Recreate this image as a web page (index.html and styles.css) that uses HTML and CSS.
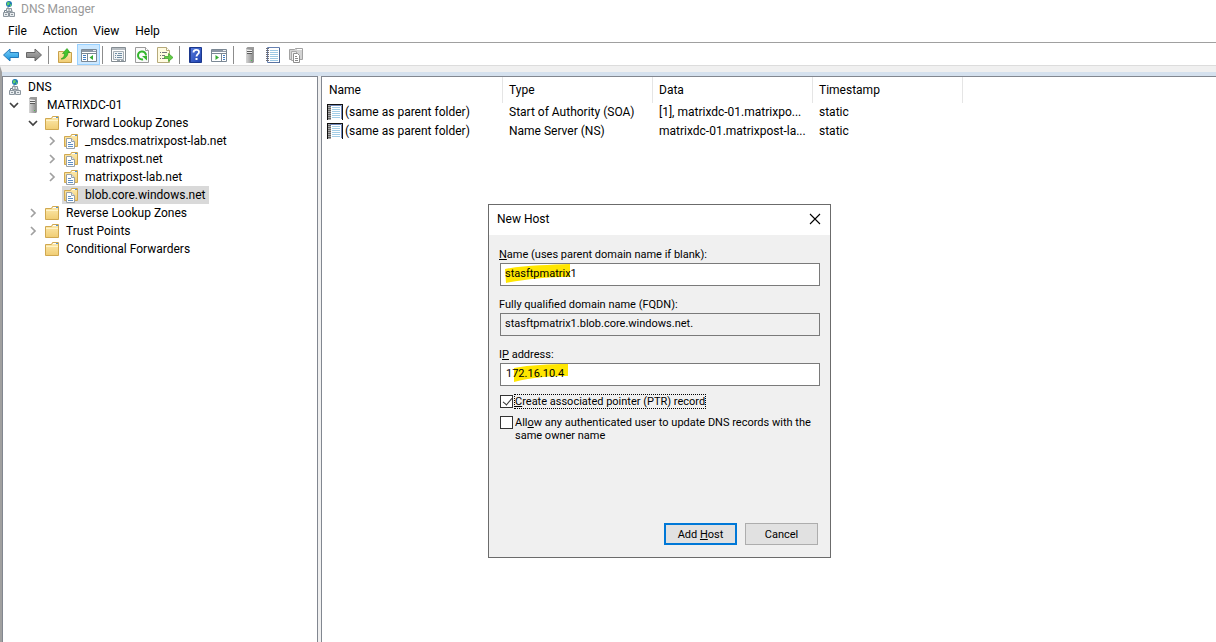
FILE: index.html
```html
<!DOCTYPE html>
<html lang="en">
<head>
<meta charset="utf-8">
<title>DNS Manager</title>
<link rel="stylesheet" href="styles.css">
</head>
<body>
<svg class="sprite" aria-hidden="true">
  <defs>
    <linearGradient id="g-folder" x1="0" y1="0" x2="0" y2="1"><stop offset="0" stop-color="#fdebb0"/><stop offset="1" stop-color="#f0cc72"/></linearGradient>
    <linearGradient id="g-blue" x1="0" y1="0" x2="0" y2="1"><stop offset="0" stop-color="#7fd2fb"/><stop offset="1" stop-color="#1591dc"/></linearGradient>
    <linearGradient id="g-gray" x1="0" y1="0" x2="0" y2="1"><stop offset="0" stop-color="#b4b4b4"/><stop offset="1" stop-color="#777"/></linearGradient>
    <linearGradient id="g-server" x1="0" y1="0" x2="1" y2="0"><stop offset="0" stop-color="#d6d6d6"/><stop offset="1" stop-color="#8c8c8c"/></linearGradient>
    <linearGradient id="g-help" x1="0" y1="0" x2="1" y2="1"><stop offset="0" stop-color="#5b7fe0"/><stop offset="1" stop-color="#1c3fae"/></linearGradient>
  </defs>
  <symbol id="i-dns" viewBox="0 0 16 16">
    <path d="M8 6v3M4.500 11V9.500H12V11" fill="none" stroke="#70808c"/>
    <circle cx="9" cy="3" r="3" fill="#1d78b4"/><path d="M7 1.500l2-.5 1 1-1 2-2 .5zM10 3.500l1.500-.5-.5 2-1 .5z" fill="#5fd068"/>
    <path d="M6.500 7.500h5v3h-5zM3.500 11.500h5v4h-5zM9.500 11.500h5v4h-5z" fill="#e7ebee" stroke="#8c969e"/>
    <path d="M5 13.500h2M11 13.500h2M8 9h2" stroke="#8d979e"/>
  </symbol>
  <symbol id="i-server" viewBox="0 0 16 16">
    <path d="M4 1.500L5.500 0H12v15l-1 1H4z" fill="#9b9b9b"/><path d="M4 2h7v14H4z" fill="url(#g-server)"/>
    <path d="M5 4.500h5M5 6.500h5" stroke="#5c5c5c"/><path d="M5 3.500h5M5 5.500h5" stroke="#efefef"/>
    <path d="M9 13h1v1H9z" fill="#47c34c"/>
  </symbol>
  <symbol id="i-folder" viewBox="0 0 16 16">
    <path d="M1.500 14.500V3.500h6l1-2h6v13z" fill="url(#g-folder)" stroke="#d0a850"/>
    <path d="M9 2.500h5" stroke="#fff"/><path d="M12 2.500h2" stroke="#4f94d8"/><path d="M2 5.500h12" stroke="#fff3c8"/>
  </symbol>
  <symbol id="i-zone" viewBox="0 0 16 16">
    <path d="M1.500 13.500V3.500h6l1-2h6v12z" fill="url(#g-folder)" stroke="#d0a850"/>
    <path d="M9 2.500h5" stroke="#fff"/><path d="M12 2.500h2" stroke="#4f94d8"/>
    <path d="M3.500 5.500h5l3 3v7h-8z" fill="#fff" stroke="#9aa2a8"/><path d="M8.500 5.500v3h3" fill="#e4ebf0" stroke="#9aa2a8"/>
    <path d="M5 9.500h3M5 11.500h5M5 13.500h5" stroke="#5f8fc4"/>
  </symbol>
  <symbol id="i-back" viewBox="0 0 16 16"><path d="M.5 8L7 2v3.500h8.500v5H7V14z" fill="url(#g-blue)" stroke="#2478b8"/></symbol>
  <symbol id="i-forward" viewBox="0 0 16 16"><path d="M15.500 8L9 2v3.500H.5v5H9V14z" fill="url(#g-gray)" stroke="#666"/></symbol>
  <symbol id="i-up" viewBox="0 0 16 16">
    <path d="M1.500 15.500V4.500h5l1.500 1h6.500v10z" fill="url(#g-folder)" stroke="#c9a04a"/>
    <path d="M4 12c2.500-1 3.500-3 3.500-5.500H5.500L10 1.500l3 4h-2C11 9 8 12.500 4 12z" fill="#43c52f" stroke="#239413" stroke-width=".6"/>
  </symbol>
  <symbol id="i-tree" viewBox="0 0 16 16">
    <path d="M.5 2.500h15v12H.5z" fill="#fff" stroke="#7b8894"/><path d="M1 4h14" stroke="#8d98a5" stroke-width="2"/><path d="M12 3.500h3" stroke="#e8edf2"/><path d="M0 6.500h16M6.500 7v8" stroke="#7b8894"/>
    <path d="M2 8.500h3M2 10.500h3M2 12.500h3" stroke="#3f7dc4"/><path d="M12 8v5l-3.500-2.500z" fill="#36ad32"/>
  </symbol>
  <symbol id="i-pane" viewBox="0 0 16 16">
    <path d="M.5 2.500h15v12H.5z" fill="#fff" stroke="#7b8894"/><path d="M1 4h14" stroke="#8d98a5" stroke-width="2"/><path d="M12 3.500h3" stroke="#e8edf2"/><path d="M0 6.500h16M10.500 7v8" stroke="#7b8894"/>
    <path d="M12 8.500h2M12 10.500h2M12 12.500h2" stroke="#3f7dc4"/><path d="M4.500 8v5L8 10.500z" fill="#36ad32"/>
  </symbol>
  <symbol id="i-props" viewBox="0 0 16 16">
    <path d="M.5.500h14v14H.5z" fill="#fff" stroke="#858d93"/><path d="M1 2h13" stroke="#b8bec3" stroke-width="2"/>
    <path d="M2.500 4.500h10v8h-10z" fill="#f1f4f6" stroke="#a7b0b6"/><path d="M4 6.500h2M7 6.500h4M4 8.500h1M6 8.500h5M4 10.500h1M6 10.500h5" stroke="#718ea4"/><path d="M6 13.500h3M10 13.500h3" stroke="#9aa4ab"/>
  </symbol>
  <symbol id="i-refresh" viewBox="0 0 16 16">
    <path d="M1.500.500h10l3 3v12h-13z" fill="#fafafa" stroke="#9b9b9b"/><path d="M11.500.500v3h3" fill="#fff" stroke="#9b9b9b"/>
    <path d="M9 12.300A4 4 0 1 1 12 8.500" fill="none" stroke="#33b52c" stroke-width="2"/><path d="M8 9h5v4.500z" fill="#33b52c"/>
  </symbol>
  <symbol id="i-export" viewBox="0 0 16 16">
    <path d="M.5.500h9l3 3v12H.5z" fill="#fffbe0" stroke="#b6aa7b"/><path d="M9.500.500v3h3" fill="#fff" stroke="#b6aa7b"/>
    <path d="M3 5.500h1M3 8.500h1M3 11.500h1M5 5.500h5M5 8.500h3M5 11.500h3" stroke="#76767c"/>
    <path d="M7.500 9.500h4V6.500l4.500 4-4.500 4v-3h-4z" fill="#62cd45" stroke="#379b25" stroke-width=".7"/>
  </symbol>
  <symbol id="i-help" viewBox="0 0 16 16">
    <path d="M1.500.500h12v15h-12z" fill="url(#g-help)" stroke="#1c388c"/><path d="M2.500 1v14" stroke="#233c8e"/>
    <path d="M5.500 5.500c0-3.500 5.500-3.500 5.500-.5 0 2-2.500 2.300-2.500 4.500" fill="none" stroke="#fff" stroke-width="1.800"/><path d="M7.500 11h2v2h-2z" fill="#fff"/>
  </symbol>
  <symbol id="i-note" viewBox="0 0 16 16">
    <path d="M2.500.500h12v15h-12z" fill="#fff" stroke="#6782b3"/><path d="M5 3.500h8M5 5.500h8M5 7.500h8M5 9.500h8M5 11.500h8M5 13.500h8" stroke="#9cc8e4"/>
    <path d="M1 1.500h3M1 3.500h3M1 5.500h3M1 7.500h3M1 9.500h3M1 11.500h3M1 13.500h3" stroke="#6f6f78"/><path d="M14.500 1v15H3" fill="none" stroke="#4d6693"/>
  </symbol>
  <symbol id="i-record" viewBox="0 0 16 16">
    <path d="M0 0h16v16H0z" fill="#111"/><path d="M1 1h14v15H1z" fill="#fff"/><path d="M1 1h3v15H1z" fill="#aaa"/>
    <path d="M1 2.500h3M1 4.500h3M1 6.500h3M1 8.500h3M1 10.500h3M1 12.500h3M1 14.500h3" stroke="#656565"/>
    <path d="M5 3.500h8M5 5.500h8M5 7.500h8M5 9.500h8M5 11.500h8M5 13.500h8" stroke="#a3cde6"/><path d="M3 1.500h11.500V15" fill="none" stroke="#7089bb"/>
  </symbol>
  <symbol id="i-docs" viewBox="0 0 16 16">
    <path d="M1.500 12.500v-10h5l1-1h7v11z" fill="#d3d3d3" stroke="#a2a2a2"/><path d="M9 2.500h5" stroke="#fff"/>
    <path d="M3.500 4.500h5v9h-5z" fill="#eee" stroke="#aaa"/><path d="M5.500 6.500h4l2 2v7h-6z" fill="#fff" stroke="#8f8f8f"/><path d="M7 9.500h2M7 11.500h3M7 13.500h3" stroke="#888"/>
  </symbol>
  <symbol id="i-open" viewBox="0 0 10 10"><path d="M1 3l4 4 4-4" fill="none" stroke="#404040" stroke-width="1.700"/></symbol>
  <symbol id="i-closed" viewBox="0 0 10 10"><path d="M3 1l4 4-4 4" fill="none" stroke="#a0a0a0" stroke-width="1.700"/></symbol>
</svg>

<div class="app">
  <header class="titlebar"><svg class="icon"><use href="#i-dns"/></svg><span>DNS Manager</span></header>
  <nav class="menubar">
    <button type="button">File</button><button type="button">Action</button><button type="button">View</button><button type="button">Help</button>
  </nav>
  <div class="toolbar" role="toolbar" aria-label="Tools">
    <button type="button" aria-label="Back"><svg class="icon"><use href="#i-back"/></svg></button>
    <button type="button" aria-label="Forward"><svg class="icon"><use href="#i-forward"/></svg></button>
    <i class="sep"></i>
    <button type="button" aria-label="Up one level"><svg class="icon"><use href="#i-up"/></svg></button>
    <button type="button" class="active" aria-label="Show or hide console tree"><svg class="icon"><use href="#i-tree"/></svg></button>
    <i class="sep"></i>
    <button type="button" aria-label="Properties"><svg class="icon"><use href="#i-props"/></svg></button>
    <button type="button" aria-label="Refresh"><svg class="icon"><use href="#i-refresh"/></svg></button>
    <button type="button" aria-label="Export list"><svg class="icon"><use href="#i-export"/></svg></button>
    <i class="sep"></i>
    <button type="button" aria-label="Help topics"><svg class="icon"><use href="#i-help"/></svg></button>
    <button type="button" aria-label="Show or hide action pane"><svg class="icon"><use href="#i-pane"/></svg></button>
    <i class="sep"></i>
    <button type="button" aria-label="New server"><svg class="icon"><use href="#i-server"/></svg></button>
    <button type="button" aria-label="New record"><svg class="icon"><use href="#i-note"/></svg></button>
    <button type="button" aria-label="New zone"><svg class="icon"><use href="#i-docs"/></svg></button>
  </div>
  <main class="workspace">
    <ul class="tree pane">
      <li><span class="item"><svg class="icon"><use href="#i-dns"/></svg><span>DNS</span></span></li>
      <li class="l1"><svg class="chev"><use href="#i-open"/></svg><span class="item"><svg class="icon"><use href="#i-server"/></svg><span>MATRIXDC-01</span></span></li>
      <li class="l2"><svg class="chev"><use href="#i-open"/></svg><span class="item"><svg class="icon"><use href="#i-folder"/></svg><span>Forward Lookup Zones</span></span></li>
      <li class="l3"><svg class="chev"><use href="#i-closed"/></svg><span class="item"><svg class="icon"><use href="#i-zone"/></svg><span>_msdcs.matrixpost-lab.net</span></span></li>
      <li class="l3"><svg class="chev"><use href="#i-closed"/></svg><span class="item"><svg class="icon"><use href="#i-zone"/></svg><span>matrixpost.net</span></span></li>
      <li class="l3"><svg class="chev"><use href="#i-closed"/></svg><span class="item"><svg class="icon"><use href="#i-zone"/></svg><span>matrixpost-lab.net</span></span></li>
      <li class="l3"><svg class="chev"></svg><span class="item selected"><svg class="icon"><use href="#i-zone"/></svg><span>blob.core.windows.net</span></span></li>
      <li class="l2"><svg class="chev"><use href="#i-closed"/></svg><span class="item"><svg class="icon"><use href="#i-folder"/></svg><span>Reverse Lookup Zones</span></span></li>
      <li class="l2"><svg class="chev"><use href="#i-closed"/></svg><span class="item"><svg class="icon"><use href="#i-folder"/></svg><span>Trust Points</span></span></li>
      <li class="l2"><svg class="chev"></svg><span class="item"><svg class="icon"><use href="#i-folder"/></svg><span>Conditional Forwarders</span></span></li>
    </ul>
    <section class="records pane">
      <table>
        <colgroup><col class="c-name"><col class="c-type"><col class="c-data"><col class="c-time"></colgroup>
        <thead><tr><th>Name</th><th>Type</th><th>Data</th><th>Timestamp</th></tr></thead>
        <tbody>
          <tr><td><span class="rec"><svg class="icon"><use href="#i-record"/></svg>(same as parent folder)</span></td><td>Start of Authority (SOA)</td><td>[1], matrixdc-01.matrixpo...</td><td>static</td></tr>
          <tr><td><span class="rec"><svg class="icon"><use href="#i-record"/></svg>(same as parent folder)</span></td><td>Name Server (NS)</td><td>matrixdc-01.matrixpost-la...</td><td>static</td></tr>
        </tbody>
      </table>
    </section>
  </main>

  <form class="dialog" role="dialog" aria-labelledby="dlg-title">
    <div class="dialog-title"><span id="dlg-title">New Host</span>
      <button type="button" aria-label="Close"><svg viewBox="0 0 12 12"><path d="M1 1l10 10M11 1L1 11" stroke="#000" stroke-width="1.100"/></svg></button></div>
    <div class="dialog-body">
      <div class="field"><label for="host"><u>N</u>ame (uses parent domain name if blank):</label>
        <div class="box"><svg class="mark" viewBox="0 0 66 20"><path d="M0 5C20 1 45 1 65 0V13C40 13 22 15 1 19z" fill="#ffe600"/></svg><input id="host" type="text" value="stasftpmatrix1"></div></div>
      <div class="field"><label for="fqdn">Fully qualified domain name (FQDN):</label>
        <div class="box readonly"><input id="fqdn" type="text" value="stasftpmatrix1.blob.core.windows.net." readonly></div></div>
      <div class="field"><label for="ip">I<u>P</u> address:</label>
        <div class="box ip"><svg class="mark" viewBox="0 0 66 20"><path d="M9 4C25 1 45 0 63 0V12C45 12 28 13 9 18z" fill="#ffe600"/></svg><input id="ip" type="text" value="172.16.10.4"></div></div>
      <div class="check"><input id="ptr" type="checkbox" checked><label for="ptr" class="focus"><u>C</u>reate associated pointer (PTR) record</label></div>
      <div class="check"><input id="allow" type="checkbox"><label for="allow">All<u>o</u>w any authenticated user to update DNS records with the<br>same owner name</label></div>
      <div class="actions"><button type="button" class="primary"><span>Add <u>H</u>ost</span></button><button type="button">Cancel</button></div>
    </div>
  </form>
</div>
</body>
</html>
```

FILE: styles.css
```css
* { box-sizing: border-box; }
html, body { height: 100%; margin: 0; }
body { background: #fff; color: #000; font: 12px/18px Roboto, "Open Sans", sans-serif; overflow: hidden; }
button, input { font: inherit; color: inherit; }
button { background: none; border: 0; padding: 0; }
.sprite { position: absolute; width: 0; height: 0; }
.icon { width: 16px; height: 16px; flex: none; display: block; }

.app { position: relative; height: 100%; display: flex; flex-direction: column; }
.titlebar { display: flex; align-items: center; gap: 5px; height: 18px; color: #999; }
.menubar { display: flex; gap: 16px; height: 24px; align-items: center; padding: 2px 8px 0; }
.toolbar { display: flex; height: 24px; align-items: center; padding-top: 1px; border-top: 1px solid #a0a0a0; border-bottom: 1px solid #dcdcdc; }
.toolbar button { width: 23px; height: 21px; display: flex; align-items: flex-end; justify-content: center; padding: 0 1px 2px 0; }
.toolbar .active { background: #cce8ff; border: 1px solid #99d1ff; padding: 0 0 1px; }
.sep { width: 8px; height: 18px; display: flex; padding-left: 2px; }
.sep::before { content: ""; width: 1px; background: #8c8c8c; }

.workspace { flex: 1; display: flex; gap: 3px; min-height: 0; background: #f0f0f0; border-top: 6px solid #f0f0f0; border-left: 2px solid #a0a0a0; box-shadow: inset 0 4px #d5e1ee; padding-top: 4px; }
.pane { background: #fff; border: 1px solid #828790; border-bottom: 0; }
.tree { width: 316px; flex: none; margin: 0; padding: 1px 0 0 3px; list-style: none; }
.tree li { display: flex; align-items: center; height: 18px; }
.l1 { padding-left: 3px; }
.l2 { padding-left: 22px; }
.l3 { padding-left: 41px; }
.chev { width: 10px; height: 10px; flex: none; margin-right: 5px; }
.item { display: flex; align-items: center; gap: 6px; height: 18px; padding: 0 4px 0 1px; white-space: nowrap; }
.tree li:first-child .item { padding-left: 0; }
.selected { background: #d9d9d9; }

.records { flex: 1; border-right: 0; min-width: 0; overflow: hidden; }
table { table-layout: fixed; width: 641px; border-collapse: separate; border-spacing: 0; }
.c-name { width: 181px; }
.c-type { width: 150px; }
.c-data { width: 160px; }
.c-time { width: 150px; }
th { height: 26px; padding: 0 6px 0 7px; text-align: left; font-weight: 400; border-right: 1px solid #e5e5e5; }
th + th, td + td { padding-left: 6px; }
td { height: 19px; padding: 0 0 0 5px; vertical-align: top; white-space: nowrap; }
.rec { display: flex; align-items: center; gap: 2px; }

.dialog { position: absolute; left: 488px; top: 204px; width: 343px; border: 1px solid #6b6b6b; background: #f0f0f0; font-size: 11px; line-height: 13px; }
.dialog-title { display: flex; align-items: center; justify-content: space-between; height: 30px; padding: 0 9px 2px 8px; background: #fff; font-size: 12px; line-height: 14px; }
.dialog-title svg { display: block; width: 12px; height: 12px; }
.dialog-body { padding: 13px 10px 12px 11px; }
.field { display: flex; flex-direction: column; gap: 2px; margin-bottom: 12px; }
.field label { margin-left: -1px; }
.box { position: relative; height: 23px; background: #fff; border: 1px solid #7a7a7a; }
.box input { position: relative; display: block; width: 100%; height: 19px; border: 0; padding: 0 4px; background: transparent; outline: 0; }
.box.ip input { padding-left: 5px; }
.readonly { background: #f0f0f0; }
.mark { position: absolute; left: 4px; top: 0; width: 66px; height: 20px; }
u { text-underline-offset: 1px; }
.check { display: flex; align-items: flex-start; gap: 2px; min-height: 21px; margin-top: -3px; }
.check + .check { margin-top: 0; }
.check input { appearance: none; flex: none; width: 13px; height: 13px; margin: 0; border: 1px solid #333; background: #fff; }
.check label { white-space: nowrap; }
.check input:checked { position: relative; }
.check input:checked::after { content: ""; position: absolute; left: 4px; top: 0; width: 4px; height: 8px; border: solid #333; border-width: 0 1px 1px 0; transform: rotate(40deg); }
.focus { outline: 1px dotted #000; }
.actions { display: flex; justify-content: flex-end; gap: 8px; margin-top: 81px; padding-right: 2px; }
.actions button { width: 73px; height: 22px; background: #e1e1e1; border: 1px solid #adadad; }
.actions .primary { border: 2px solid #0078d7; }
```
